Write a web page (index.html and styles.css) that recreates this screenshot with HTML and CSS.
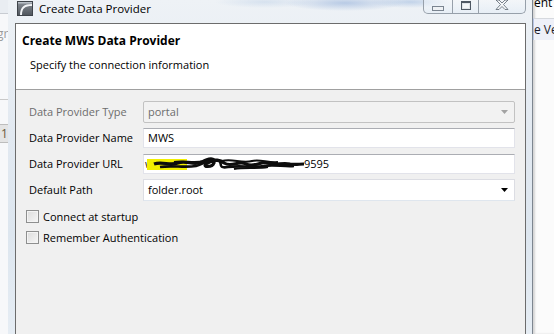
FILE: index.html
```html
<!DOCTYPE html>
<html lang="en">
<head>
  <meta charset="UTF-8">
  <title>Create Data Provider</title>
  <link rel="stylesheet" href="styles.css">
</head>
<body>

<div class="desktop">

  <div class="app-left">
    <div class="app-left-top"></div>
    <div class="app-left-text">gr</div>
    <div class="app-left-cell">1</div>
  </div>

  <div class="window">
    <div class="titlebar">
      <svg class="app-icon" width="16" height="15" viewBox="0 0 16 15">
        <defs>
          <linearGradient id="ig" x1="0" y1="0" x2="0" y2="1">
            <stop offset="0" stop-color="#8a9097"/>
            <stop offset="1" stop-color="#4e545b"/>
          </linearGradient>
        </defs>
        <rect x="0.5" y="0.5" width="15" height="14" fill="url(#ig)" stroke="#3f444a"/>
        <path d="M5 14 C5 7 8 5 15 5 L15 3 C7 3 3 6 3 14 Z" fill="#f2f4f6"/>
        <rect x="1" y="1" width="14" height="1.5" fill="#b9c0c7"/>
      </svg>
      <span class="caption">Create Data Provider</span>
      <div class="caption-buttons">
        <span class="cbtn cbtn-min"><i></i></span>
        <span class="cbtn cbtn-max"><i></i></span>
        <span class="cbtn cbtn-close">
          <svg width="14" height="10" viewBox="0 0 14 10">
            <path d="M1 0 L4 0 L7 3 L10 0 L13 0 L8.5 4.5 L13 9.5 L10 9.5 L7 6.5 L4 9.5 L1 9.5 L5.5 4.5 Z" fill="#f4f6f8" stroke="#5b6470" stroke-width="0.8"/>
          </svg>
        </span>
      </div>
    </div>

    <div class="client">
      <div class="banner">
        <h1>Create MWS Data Provider</h1>
        <p>Specify the connection information</p>
      </div>

      <div class="page">
        <div class="form">
          <label class="disabled">Data Provider Type</label>
          <div class="combo combo-disabled">
            <span>portal</span>
            <svg class="arrow" width="7" height="4" viewBox="0 0 7 4"><path d="M0 0 H7 L3.5 4 Z" fill="#a3a3a3"/></svg>
          </div>

          <label>Data Provider Name</label>
          <div class="field"><span>MWS</span></div>

          <label>Data Provider URL</label>
          <div class="field">
            <svg class="redact" width="160" height="18" viewBox="0 0 160 18">
              <text x="1" y="13" font-family="Open Sans, sans-serif" font-size="11" fill="#222">w</text>
              <rect x="3" y="4" width="40" height="11" fill="#f2ef00"/>
              <path d="M10 9 C18 6 26 11 34 8 C42 5 50 11 58 7 C64 3 72 2 70 8 C68 13 58 12 62 9 C68 5 76 4 80 8 C88 13 94 5 102 9 C110 13 116 6 124 8 C132 11 138 7 146 9 C151 10 155 9 160 9" fill="none" stroke="#0d0d0d" stroke-width="3.2"/>
              <path d="M16 12 C28 10 40 13 52 11 C60 9 66 3 74 5 C80 7 72 14 84 12 C96 10 108 13 120 11 C130 9 140 12 150 11" fill="none" stroke="#0d0d0d" stroke-width="2.6"/>
              <path d="M30 7 C40 5 50 9 60 6 M78 6 C88 3 98 9 108 6 C116 4 124 8 134 7 M90 14 C100 12 112 14 124 12" fill="none" stroke="#0d0d0d" stroke-width="2"/>
            </svg><span>9595</span>
          </div>

          <label>Default Path</label>
          <div class="combo">
            <span>folder.root</span>
            <svg class="arrow" width="7" height="4" viewBox="0 0 7 4"><path d="M0 0 H7 L3.5 4 Z" fill="#000"/></svg>
          </div>
        </div>

        <div class="checks">
          <div class="check"><span class="box"></span>Connect at startup</div>
          <div class="check"><span class="box"></span>Remember Authentication</div>
        </div>
      </div>
    </div>
  </div>

  <div class="app-right">
    <div class="app-right-text">ent</div>
    <div class="app-right-tab">e Ver</div>
  </div>

</div>

</body>
</html>
```

FILE: styles.css
```css
body {
  margin: 0;
  font-family: 'Open Sans', 'Noto Sans', sans-serif;
  font-size: 11px;
  color: #000;
  background: #fff;
}

.desktop {
  display: flex;
  width: 554px;
  height: 334px;
  overflow: hidden;
}

/* background app, left */
.app-left {
  width: 8px;
  flex: none;
  background: #f7f8fa;
  overflow: hidden;
  color: #9a9a9a;
}

.app-left-top {
  height: 13px;
  border-bottom: 1px solid #c8ccd2;
  background: #e9edf2;
}

.app-left-text {
  margin-top: 11px;
  margin-left: -3px;
  font-size: 12px;
  height: 74px;
  border-bottom: 1px solid #c9c9c9;
}

.app-left-cell {
  margin-top: 24px;
  height: 17px;
  line-height: 17px;
  background: #e4e4e4;
  border-top: 1px solid #bdbdbd;
  border-bottom: 1px solid #bdbdbd;
  padding-left: 1px;
  color: #6a5a3a;
  font-size: 12px;
}

/* window frame */
.window {
  width: 525px;
  flex: none;
  display: flex;
  flex-direction: column;
  box-sizing: border-box;
  padding: 0 6px 0 7px;
  background: linear-gradient(180deg, #eef2f6 0%, #e2e9f1 40%, #dde6ef 70%, #e6edf4 100%);
  border-right: 1px solid #7d8690;
}

.titlebar {
  height: 23px;
  display: flex;
  align-items: flex-start;
  background:
    radial-gradient(ellipse 60px 8px at 330px 3px, rgba(140, 170, 215, 0.55), transparent),
    radial-gradient(ellipse 40px 6px at 395px 2px, rgba(150, 180, 220, 0.5), transparent),
    radial-gradient(ellipse 50px 6px at 250px 2px, rgba(170, 195, 225, 0.35), transparent);
}

.app-icon {
  margin: 1px 0 0 2px;
  flex: none;
}

.caption {
  margin-left: 6px;
  margin-top: 1px;
  font-size: 11.5px;
  line-height: 16px;
  color: #000;
}

.caption-buttons {
  margin-left: auto;
  margin-right: 0;
  display: flex;
  height: 13px;
  border: 1px solid #97a0aa;
  border-top: none;
  border-radius: 0 0 5px 5px;
  background: linear-gradient(180deg, rgba(255,255,255,0.3), rgba(230,238,246,0.8));
  overflow: hidden;
}

.cbtn {
  display: flex;
  justify-content: center;
}

.cbtn-min {
  width: 28px;
  border-right: 1px solid #97a0aa;
}

.cbtn-min i {
  margin-top: 6px;
  width: 10px;
  height: 3px;
  border: 1px solid #7a8490;
  background: #eef1f4;
}

.cbtn-max {
  width: 25px;
  border-right: 1px solid #97a0aa;
}

.cbtn-max i {
  margin-top: 1px;
  width: 8px;
  height: 6px;
  border: 1px solid #4f5863;
  border-top-width: 2px;
  background: #f4f6f8;
  box-shadow: inset 0 0 0 1px #e0e4e8;
}

.cbtn-close {
  width: 46px;
}

/* client area */
.client {
  flex: 1;
  border: 1px solid #6c6c6c;
  border-bottom: none;
  background: #f0f0f0;
  display: flex;
  flex-direction: column;
}

.banner {
  background: #fff;
  height: 66px;
  box-sizing: border-box;
  padding: 9px 0 0 6px;
  border-bottom: 1px solid #a0a0a0;
}

.banner h1 {
  margin: 0;
  font-size: 12px;
  font-weight: bold;
  line-height: 16px;
}

.banner p {
  margin: 8px 0 0 8px;
  line-height: 16px;
}

.page {
  padding: 9px 10px 0 10px;
}

.form {
  display: grid;
  grid-template-columns: 114px 1fr;
  grid-auto-rows: 26px;
  align-items: center;
  padding-left: 3px;
}

.form label {
  line-height: 16px;
}

.form label.disabled {
  color: #6d6d6d;
}

.field, .combo {
  height: 20px;
  box-sizing: border-box;
  background: #fff;
  border: 1px solid #e2e3ea;
  border-top-color: #abadb3;
  display: flex;
  align-items: center;
  padding-left: 4px;
  line-height: 16px;
}

.combo {
  height: 22px;
  border: 1px solid #dcdde3;
  border-bottom-color: #dfe6ee;
  padding-right: 6px;
}

.combo .arrow {
  margin-left: auto;
}

.combo-disabled {
  background: #f2f2f2;
  border: 1px solid #c2c2c2;
  border-radius: 2px;
  color: #6d6d6d;
}

.redact {
  margin-left: -4px;
  flex: none;
}

.checks {
  margin-top: 3px;
}

.check {
  height: 21px;
  display: flex;
  align-items: center;
  line-height: 16px;
}

.box {
  width: 13px;
  height: 13px;
  box-sizing: border-box;
  border: 1px solid #8e8f8f;
  background: linear-gradient(135deg, #dcdcdc, #f6f6f6);
  box-shadow: inset 0 0 0 1px #f4f4f4;
  margin-right: 4px;
}

/* background app, right */
.app-right {
  flex: 1;
  background: #fbfbfb;
  box-shadow: inset 2px 0 2px rgba(0,0,0,0.15);
  overflow: hidden;
  white-space: nowrap;
  font-size: 12px;
}

.app-right-text {
  margin-top: -5px;
  margin-left: 1px;
  height: 16px;
  line-height: 16px;
}

.app-right-tab {
  margin-top: 7px;
  height: 21px;
  line-height: 21px;
  background: #eef0f8;
  border-left: 1px solid #b8c4e4;
  border-top: 1px solid #d6d9de;
  color: #1a1a2a;
}
```
